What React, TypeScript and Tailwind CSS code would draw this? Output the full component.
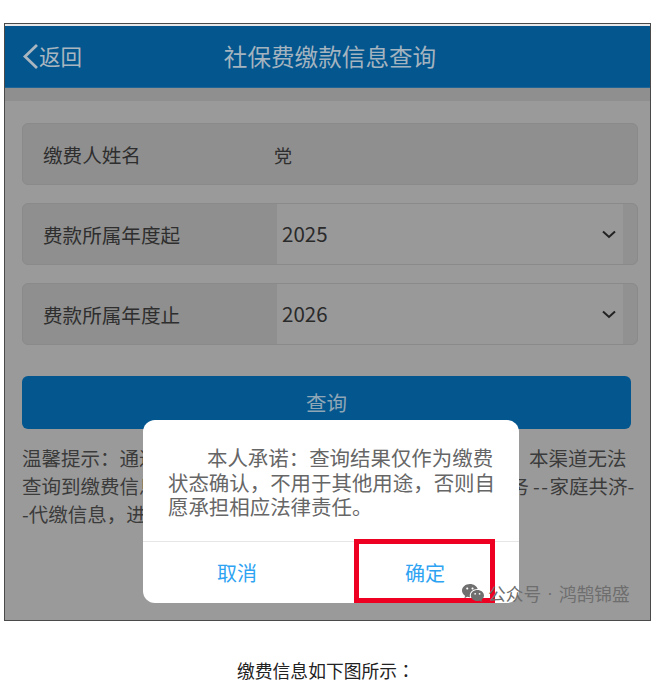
import { RiWechatFill } from "react-icons/ri";

function Chevron() {
  return (
    <svg width="14" height="9" viewBox="0 0 14 9" fill="none" className="block">
      <path d="M1 1.5 L7 7 L13 1.5" stroke="#222222" strokeWidth="2" />
    </svg>
  );
}

function SelectRow({ label, value }: { label: string; value: string }) {
  return (
    <div className="mb-[18px] flex h-[62px] w-[616px] rounded-md border border-[#8a8a8a] bg-[#8f8f8f]">
      <div className="flex w-[254px] shrink-0 items-center pl-5 pt-[2px] text-[19.6px] text-[#2e2e2e]">{label}</div>
      <div className="flex flex-1 items-center justify-between bg-[#999999] pl-[5px] pr-[7px]">
        <span className="pb-[2px] text-[20.5px] text-[#2a2a2a]">{value}</span>
        <Chevron />
      </div>
      <div className="w-[14px] shrink-0 rounded-r-md bg-[#919191]" />
    </div>
  );
}

export default function App() {
  return (
    <div className="h-[683px] w-[653px] overflow-hidden bg-white font-['Noto_Sans_CJK_SC','Noto_Sans',sans-serif]">
      <div className="relative ml-1 mt-[23px] h-[598px] w-[647px] overflow-hidden border border-[#4a4a4a] bg-[#9a9a9a]">
        <div className="h-0.5 bg-[#e8e8e8]" />
        <header className="relative flex h-[62px] items-center justify-center border-b border-[#1f6596] bg-[#04568e]">
          <div className="absolute left-[17px] flex items-center">
            <svg width="17" height="27" viewBox="0 0 17 27" fill="none" className="block">
              <path d="M15 2 L3 13.5 L15 25" stroke="#a9b6c0" strokeWidth="2.8" />
            </svg>
            <span className="text-[21.5px] text-[#a9b6c0]">返回</span>
          </div>
          <h1 className="pl-[5px] text-[23.6px] font-normal text-[#a3b3bf]">社保费缴款信息查询</h1>
        </header>
        <div className="h-[13px] bg-[#8f8f8f]" />

        <main className="pl-[17px] pt-[22px]">
          <div className="mb-[18px] flex h-[62px] w-[616px] items-center rounded-md border border-[#8a8a8a] bg-[#8f8f8f] pl-5 pt-[2px] text-[19.6px] text-[#2e2e2e]">
            <span className="w-[231px]">缴费人姓名</span>
            <span className="text-[18px]">党</span>
          </div>
          <SelectRow label="费款所属年度起" value="2025" />
          <SelectRow label="费款所属年度止" value="2026" />

          <button className="mt-[31px] block h-[53px] w-[609px] rounded-md bg-[#04568e] text-[20.5px] text-[#8fa6b6]">
            查询
          </button>

          <div className="mt-[15px] whitespace-nowrap text-[19.5px] leading-[28px] text-[#3b3b3b]">
            <div>温馨提示：通过此功能可查询本人及家庭成员的缴费记录。本渠道无法</div>
            <div>
              查询到缴费信息的，请前往手机客户端办理家庭代缴类业务
              <span className="pl-[4px] tracking-[1.5px]">--</span>
              家庭共济-
            </div>
            <div>-代缴信息，进行查询。</div>
          </div>
        </main>

        {/* confirm dialog over the dimmed page */}
        <div className="absolute left-[138px] top-[396px] w-[376px] overflow-hidden rounded-xl bg-white">
          <div className="h-[121px] whitespace-nowrap px-[25px] pt-[25px] text-[20.45px] leading-[24.5px] text-[#666666]">
            <div className="pl-[39px]">本人承诺：查询结果仅作为缴费</div>
            <div>状态确认，不用于其他用途，否则自</div>
            <div>愿承担相应法律责任。</div>
          </div>
          <div className="flex h-[62px] items-center border-t border-[#e6e6e6] text-[20px] text-[#2ea3f2]">
            <button className="w-[188px] text-center">取消</button>
            <button className="w-[188px] text-center">确定</button>
          </div>
        </div>

        {/* red annotation box */}
        <div className="absolute left-[349px] top-[515px] h-[64px] w-[141px] border-[5px] border-[#ee0022]" />

        {/* watermark */}
        <div className="absolute left-[456px] top-[556px] flex items-center text-[17.7px] text-[#6e6e6e]">
          <RiWechatFill className="mr-[3px] text-[24px] text-[#6f6f6f]" />
          <span>公众号</span>
          <span className="mx-[6px] font-['Liberation_Sans']">·</span>
          <span>鸿鹄锦盛</span>
        </div>
      </div>

      <p className="mt-[37px] pl-[237px] text-[17.8px] leading-[24px] text-[#222222]">
        缴费信息如下图所示<span className="font-['Noto_Sans_CJK_TC']">：</span>
      </p>
    </div>
  );
}
